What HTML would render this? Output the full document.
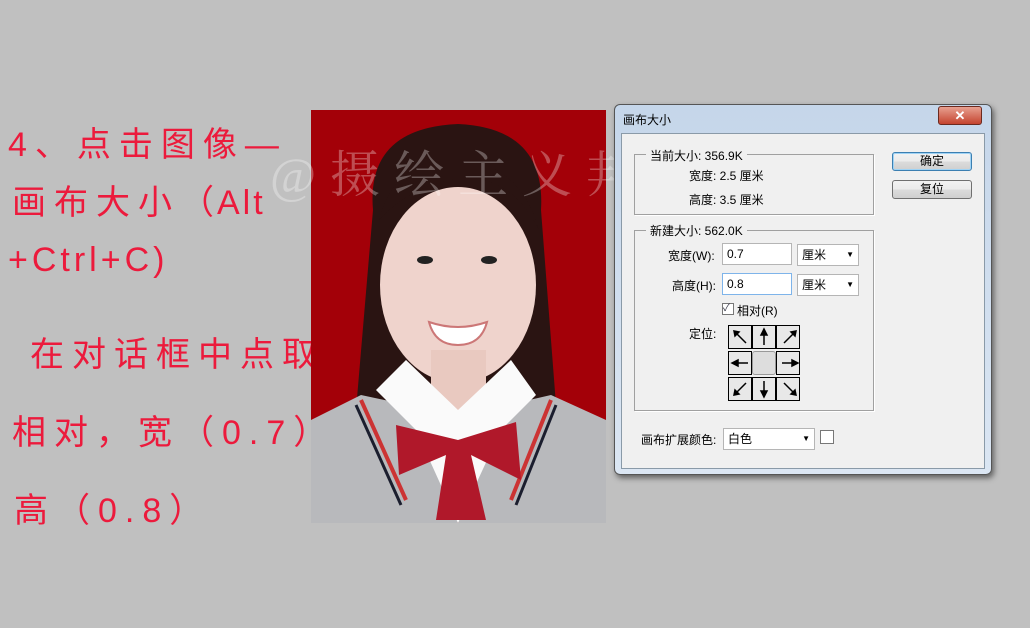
<!DOCTYPE html>
<html><head><meta charset="utf-8"><style>
body{margin:0;width:1030px;height:628px;background:#c0c0c0;position:relative;overflow:hidden;font-family:"Liberation Sans","Noto Sans CJK SC",sans-serif}
.t{position:absolute;color:#ec1a3c;font-size:34px;letter-spacing:8px;white-space:nowrap;font-family:"Liberation Sans","Noto Sans CJK SC",sans-serif;line-height:1}
.d{position:absolute;font-size:12px;color:#000;white-space:nowrap}
.box{position:absolute;border:1px solid #a0a0a0;box-shadow:1px 1px 0 #fff}
.inp{position:absolute;background:#fff;border:1px solid #b5b5b5;font-size:12px;padding-left:4px;line-height:20px;height:20px}
.btn{position:absolute;width:78px;height:17px;border:1px solid #707070;border-radius:3px;background:linear-gradient(#f2f2f2,#ebebeb 50%,#dcdcdc 50%,#cfcfcf);font-size:12px;text-align:center;line-height:17px}
.cell{position:absolute;width:22px;height:22px;border:1px solid #000;background:#e8e8e8}
</style></head><body>
<div class="t" style="left:8px;top:128px">4、点击图像<span style="letter-spacing:0">—</span></div>
<div class="t" style="left:12px;top:186px">画布大小（</div>
<div class="t" style="left:217px;top:186px;letter-spacing:3px">Alt</div>
<div class="t" style="left:8px;top:243px;letter-spacing:4px">+Ctrl+C)</div>
<div class="t" style="left:30px;top:338px">在对话框中点取</div>
<div class="t" style="left:12px;top:416px">相对，宽（<span style="letter-spacing:8px">0.7</span>）</div>
<div class="t" style="left:14px;top:494px">高（<span>0.8</span>）</div>

<svg style="position:absolute;left:311px;top:110px" width="295" height="413" viewBox="0 0 295 413">
<rect width="295" height="413" fill="#a30008"/>
<path d="M62 100 Q55 18 147 14 Q235 18 230 100 L245 295 L45 300 Z" fill="#2a1412"/>
<ellipse cx="147" cy="175" rx="78" ry="98" fill="#efd3cc"/>
<path d="M68 110 Q85 45 150 50 Q210 55 228 120 Q200 65 150 68 Q100 75 68 110Z" fill="#2a1412"/>
<rect x="120" y="240" width="55" height="60" fill="#e9c9c0"/>
<path d="M118 212 Q147 222 176 212 Q170 235 147 235 Q124 235 118 212Z" fill="#fff" stroke="#c77" stroke-width="2"/>
<ellipse cx="114" cy="150" rx="8" ry="4" fill="#222"/><ellipse cx="178" cy="150" rx="8" ry="4" fill="#222"/>
<path d="M0 310 L50 285 L120 300 L147 413 L0 413Z" fill="#b8b9bc"/>
<path d="M295 310 L240 285 L175 300 L147 413 L295 413Z" fill="#b8b9bc"/>
<path d="M65 280 L95 250 L147 300 L200 250 L225 285 L190 320 L147 413 L105 320Z" fill="#fafafa"/>
<path d="M50 290 L95 390 M240 290 L200 390" stroke="#c33" stroke-width="4"/>
<path d="M45 295 L90 395 M245 295 L205 395" stroke="#1b1e2e" stroke-width="3"/>
<path d="M85 315 L147 330 L205 312 L210 370 L160 345 L175 410 L125 410 L135 345 L88 365Z" fill="#b0182a"/>
</svg>
<div style="position:absolute;left:270px;top:135px;font-size:50px;color:rgba(255,255,255,.3);letter-spacing:14px;font-family:'Liberation Serif','Noto Serif CJK SC',serif;white-space:nowrap">@摄绘主义邦子</div>

<div style="position:absolute;left:614px;top:104px;width:376px;height:369px;background:linear-gradient(#c5d6ea,#dbe6f3);border:1px solid #555;border-radius:6px;box-shadow:2px 3px 6px rgba(0,0,0,.5)"></div>
<div class="d" style="left:623px;top:111px">画布大小</div>
<div style="position:absolute;left:938px;top:106px;width:42px;height:17px;background:linear-gradient(#e8a090,#c4442f);border:1px solid #6b2a20;border-radius:3px;color:#fff;font-size:13px;text-align:center;line-height:17px;font-weight:bold">✕</div>
<div style="position:absolute;left:621px;top:133px;width:362px;height:334px;background:#f0f0f0;border:1px solid #8a9aa8"></div>
<div class="box" style="left:634px;top:154px;width:238px;height:59px"></div>
<div class="d" style="left:646px;top:147px;background:#f0f0f0;padding:0 4px">当前大小: 356.9K</div>
<div class="d" style="left:689px;top:167px">宽度:  2.5 厘米</div>
<div class="d" style="left:689px;top:191px">高度:  3.5 厘米</div>
<div class="box" style="left:634px;top:230px;width:238px;height:179px"></div>
<div class="d" style="left:646px;top:222px;background:#f0f0f0;padding:0 4px">新建大小: 562.0K</div>
<div class="d" style="left:668px;top:247px">宽度(W):</div>
<div class="inp" style="left:722px;top:243px;width:64px">0.7</div>
<div class="inp" style="left:797px;top:244px;width:56px">厘米<span style="position:absolute;right:4px;font-size:8px">▼</span></div>
<div class="d" style="left:672px;top:277px">高度(H):</div>
<div class="inp" style="left:722px;top:273px;width:64px;border-color:#7eb4ea">0.8</div>
<div class="inp" style="left:797px;top:274px;width:56px">厘米<span style="position:absolute;right:4px;font-size:8px">▼</span></div>
<div style="position:absolute;left:722px;top:303px;width:10px;height:10px;border:1px solid #777;background:#fff;font-size:10px;line-height:10px;color:#334">✓</div>
<div class="d" style="left:737px;top:302px">相对(R)</div>
<div class="d" style="left:689px;top:325px">定位:</div>
<div class="cell" style="left:728px;top:325px"></div><div class="cell" style="left:752px;top:325px"></div><div class="cell" style="left:776px;top:325px"></div>
<div class="cell" style="left:728px;top:351px"></div><div class="cell" style="left:752px;top:351px;background:#ddd;border-color:#999;border-radius:3px"></div><div class="cell" style="left:776px;top:351px"></div>
<div class="cell" style="left:728px;top:377px"></div><div class="cell" style="left:752px;top:377px"></div><div class="cell" style="left:776px;top:377px"></div>
<svg style="position:absolute;left:728px;top:325px" width="74" height="76" stroke="#000" stroke-width="1.5" fill="#000">
<path d="M18 18 L6 6 M6 6 l5 1 l-4 4z"/><path d="M36 20 L36 5 M36 4 l-3 6 h6z"/><path d="M56 18 L68 6 M68 6 l-5 1 l4 4z"/>
<path d="M20 38 L5 38 M4 38 l6 -3 v6z"/><path d="M54 38 L69 38 M70 38 l-6 -3 v6z"/>
<path d="M18 58 L6 70 M6 70 l1 -5 l4 4z"/><path d="M36 56 L36 71 M36 72 l-3 -6 h6z"/><path d="M56 58 L68 70 M68 70 l-1 -5 l-4 4z"/>
</svg>
<div class="d" style="left:641px;top:431px">画布扩展颜色:</div>
<div class="inp" style="left:723px;top:428px;width:86px">白色<span style="position:absolute;right:4px;font-size:8px">▼</span></div>
<div style="position:absolute;left:820px;top:430px;width:12px;height:12px;border:1px solid #777;background:#fff"></div>
<div class="btn" style="left:892px;top:152px;border-color:#3c7fb1;box-shadow:0 0 0 1px #9fd3f5 inset">确定</div>
<div class="btn" style="left:892px;top:180px">复位</div>
</body></html>
